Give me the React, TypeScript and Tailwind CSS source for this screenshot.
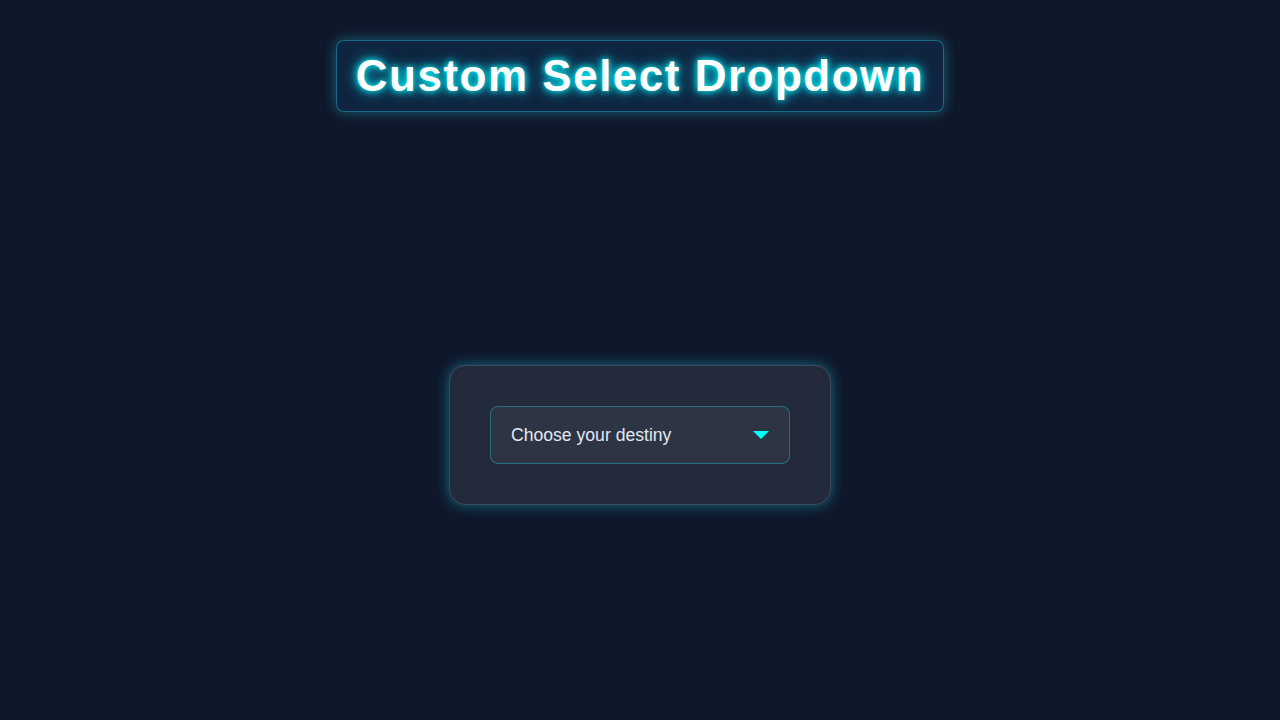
import React from 'react';

export default function App() {
  return (
    <main className="min-h-screen bg-[#0f172a] flex flex-col items-center font-['Liberation_Sans',Arial,sans-serif]">
      {/* Title */}
      <h1 className="mt-10 h-[72px] px-[19px] flex items-center rounded-lg border border-[#22d3ee]/40 bg-[#0f2440] shadow-[0_0_14px_rgba(34,211,238,0.4)] text-[44px] font-bold tracking-[1.5px] text-white [text-shadow:0_0_6px_#00ffff,0_0_14px_#00e5ff]">
        Custom Select Dropdown
      </h1>

      {/* Card */}
      <div className="mt-[253px] w-[382px] rounded-2xl border border-[#3b4a5c] bg-[#232a3c] p-10 shadow-[0_0_14px_rgba(34,211,238,0.45)]">
        <button className="w-full h-[58px] flex items-center justify-between px-5 rounded-lg border border-[#1f9aa8]/60 bg-[#2d3545] text-[17.6px] text-[#e2e8f0]">
          <span>Choose your destiny</span>
          <svg width="16" height="9" viewBox="0 0 16 9" aria-hidden="true">
            <polygon points="0,0 16,0 8,8" fill="#00ffff" />
          </svg>
        </button>
      </div>
    </main>
  );
}
